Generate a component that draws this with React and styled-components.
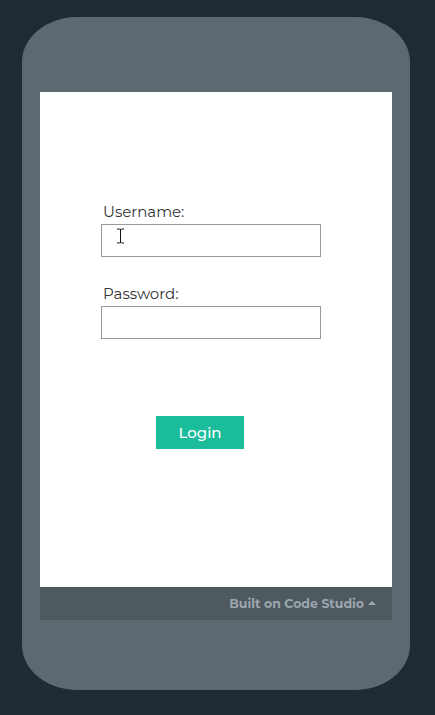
import styled, { createGlobalStyle } from 'styled-components';

const Global = createGlobalStyle`
  html, body {
    margin: 0;
    padding: 0;
    background: #1f2a33;
    font-family: "Montserrat", "Open Sans", "Liberation Sans", sans-serif;
  }
`;

const Page = styled.div`
  width: 435px;
  height: 715px;
  padding-top: 17px;
  box-sizing: border-box;
`;

const Phone = styled.div`
  margin-left: 22px;
  width: 388px;
  height: 673px;
  box-sizing: border-box;
  padding: 75px 18px 0 18px;
  background: #5c6970;
  border-radius: 55px / 45px;
`;

const Screen = styled.div`
  position: relative;
  height: 495px;
  background: #fff;
  display: flex;
  flex-direction: column;
  padding: 111px 0 0 61px;
  box-sizing: border-box;
`;

const Field = styled.div`
  display: flex;
  flex-direction: column;
  margin-bottom: ${p => p.$gap}px;
`;

const Label = styled.label`
  font-size: 15px;
  color: #333;
  margin-left: 2px;
  line-height: 18px;
  margin-bottom: 3px;
`;

const Input = styled.input`
  width: 220px;
  height: 33px;
  box-sizing: border-box;
  border: 1px solid #999;
  margin: 0;
  padding: 0 8px;
  font-size: 14px;
  outline: none;
`;

const Button = styled.button`
  margin: 77px 0 0 55px;
  width: 88px;
  height: 33px;
  border: none;
  background: #1abc9c;
  color: #fff;
  font-family: inherit;
  font-size: 15px;
  font-weight: 500;
  padding: 0;
  cursor: pointer;
`;

const Cursor = styled.svg`
  position: absolute;
  left: 76px;
  top: 136px;
`;

const Footer = styled.div`
  height: 33px;
  background: #4f5960;
  display: flex;
  align-items: center;
  justify-content: flex-end;
  padding-right: 16px;
  color: #9ca6ae;
  font-size: 12.5px;
  font-weight: bold;
  gap: 4px;
`;

const Caret = styled.span`
  width: 0;
  height: 0;
  border-left: 4px solid transparent;
  border-right: 4px solid transparent;
  border-bottom: 4px solid #9ca6ae;
  margin-bottom: 2px;
`;

export default function App() {
  return (
    <Page>
      <Global />
      <Phone>
        <Screen>
          <Field $gap={28}>
            <Label>Username:</Label>
            <Input type="text" />
          </Field>
          <Field $gap={0}>
            <Label>Password:</Label>
            <Input type="password" />
          </Field>
          <Button>Login</Button>
          <Cursor width="9" height="16" viewBox="0 0 9 16">
            <path d="M1 1h2.5M5.5 1H8M4.5 1.5v13M1 15h2.5M5.5 15H8M3.5 1.5h2M3.5 14.5h2" stroke="#111" strokeWidth="1" fill="none" />
          </Cursor>
        </Screen>
        <Footer>
          Built on Code Studio <Caret />
        </Footer>
      </Phone>
    </Page>
  );
}
